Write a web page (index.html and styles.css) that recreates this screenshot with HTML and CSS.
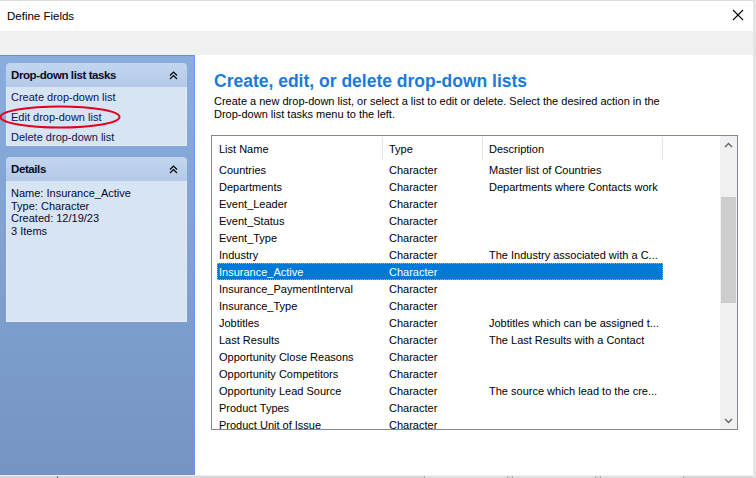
FILE: index.html
```html
<!DOCTYPE html>
<html>
<head>
<meta charset="utf-8">
<link rel="stylesheet" href="styles.css">
</head>
<body>
<div class="topline"></div>
<div class="window">
  <div class="titlebar">
    <span class="title">Define Fields</span>
    <svg class="close" width="12" height="12" viewBox="0 0 12 12"><path d="M1 1 L11 11 M11 1 L1 11" stroke="#000" stroke-width="1.1" fill="none"/></svg>
  </div>
  <div class="band"></div>
  <div class="main">
    <aside class="sidebar">
      <section class="box">
        <div class="box-head">
          <span>Drop-down list tasks</span>
          <svg class="chev" width="9" height="9" viewBox="0 0 9 9"><path d="M1 4.5 L4.5 1 L8 4.5 M1 8 L4.5 4.5 L8 8" stroke="#000" stroke-width="1.2" fill="none"/></svg>
        </div>
        <div class="box-body tasks">
          <div class="task">Create drop-down list</div>
          <div class="task edit">Edit drop-down list
            <svg class="ring" width="122" height="24" viewBox="0 0 122 24"><ellipse cx="61" cy="12" rx="59.5" ry="10.5" stroke="#e3001b" stroke-width="2" fill="none"/></svg>
          </div>
          <div class="task">Delete drop-down list</div>
        </div>
      </section>
      <section class="box">
        <div class="box-head">
          <span>Details</span>
          <svg class="chev" width="9" height="9" viewBox="0 0 9 9"><path d="M1 4.5 L4.5 1 L8 4.5 M1 8 L4.5 4.5 L8 8" stroke="#000" stroke-width="1.2" fill="none"/></svg>
        </div>
        <div class="box-body details">
          <div>Name: Insurance_Active</div>
          <div>Type: Character</div>
          <div>Created: 12/19/23</div>
          <div>3 Items</div>
        </div>
      </section>
    </aside>
    <div class="content">
      <h1 class="heading">Create, edit, or delete drop-down lists</h1>
      <p class="intro">Create a new drop-down list, or select a list to edit or delete. Select the desired action in the<br>Drop-down list tasks menu to the left.</p>
      <div class="table">
        <div class="list">
          <div class="head">
            <div class="c1 hc">List Name</div>
            <div class="c2 hc">Type</div>
            <div class="c3 hc">Description</div>
          </div>
          <div class="rows">
            <div class="row"><span class="c1">Countries</span><span class="c2">Character</span><span class="c3">Master list of Countries</span></div>
            <div class="row"><span class="c1">Departments</span><span class="c2">Character</span><span class="c3">Departments where Contacts work</span></div>
            <div class="row"><span class="c1">Event_Leader</span><span class="c2">Character</span><span class="c3"></span></div>
            <div class="row"><span class="c1">Event_Status</span><span class="c2">Character</span><span class="c3"></span></div>
            <div class="row"><span class="c1">Event_Type</span><span class="c2">Character</span><span class="c3"></span></div>
            <div class="row"><span class="c1">Industry</span><span class="c2">Character</span><span class="c3">The Industry associated with a C...</span></div>
            <div class="row sel"><span class="c1">Insurance_Active</span><span class="c2">Character</span><span class="c3"></span></div>
            <div class="row"><span class="c1">Insurance_PaymentInterval</span><span class="c2">Character</span><span class="c3"></span></div>
            <div class="row"><span class="c1">Insurance_Type</span><span class="c2">Character</span><span class="c3"></span></div>
            <div class="row"><span class="c1">Jobtitles</span><span class="c2">Character</span><span class="c3">Jobtitles which can be assigned t...</span></div>
            <div class="row"><span class="c1">Last Results</span><span class="c2">Character</span><span class="c3">The Last Results with a Contact</span></div>
            <div class="row"><span class="c1">Opportunity Close Reasons</span><span class="c2">Character</span><span class="c3"></span></div>
            <div class="row"><span class="c1">Opportunity Competitors</span><span class="c2">Character</span><span class="c3"></span></div>
            <div class="row"><span class="c1">Opportunity Lead Source</span><span class="c2">Character</span><span class="c3">The source which lead to the cre...</span></div>
            <div class="row"><span class="c1">Product Types</span><span class="c2">Character</span><span class="c3"></span></div>
            <div class="row"><span class="c1">Product Unit of Issue</span><span class="c2">Character</span><span class="c3"></span></div>
          </div>
        </div>
        <div class="scrollbar">
          <div class="sb-btn"><svg width="9" height="6" viewBox="0 0 9 6"><path d="M1 5 L4.5 1.5 L8 5" stroke="#606060" stroke-width="1.3" fill="none"/></svg></div>
          <div class="sb-gap"></div>
          <div class="sb-thumb"></div>
          <div class="sb-fill"></div>
          <div class="sb-btn"><svg width="9" height="6" viewBox="0 0 9 6"><path d="M1 1 L4.5 4.5 L8 1" stroke="#606060" stroke-width="1.3" fill="none"/></svg></div>
        </div>
      </div>
    </div>
  </div>
</div>
<div class="bottom">
  <div class="tick"></div>
  <div class="btn back">&lt; Back</div>
  <div class="btn">Next &gt;</div>
  <div class="btn">Cancel</div>
</div>
</body>
</html>
```

FILE: styles.css
```css
html, body {
  margin: 0;
  padding: 0;
}
body {
  width: 756px;
  height: 478px;
  overflow: hidden;
  background: #e4e4e4;
  font-family: "Liberation Sans", Arial, sans-serif;
  font-size: 11px;
  color: #000;
}
.topline {
  height: 1px;
  width: 753px;
  background: #dcdcdc;
}
.window {
  width: 753px;
  height: 474px;
  background: #fff;
  display: flex;
  flex-direction: column;
}
.titlebar {
  height: 30px;
  flex: none;
  display: flex;
  align-items: center;
  justify-content: space-between;
  padding: 0 9px 0 7px;
  background: #fff;
}
.title {
  font-size: 11.5px;
  color: #000;
  margin-top: -1px;
}
.close {
  display: block;
  margin-top: -2px;
}
.band {
  height: 24px;
  flex: none;
  background: #f0f0f0;
}
.main {
  flex: 1;
  display: flex;
  min-height: 0;
}
.sidebar {
  flex: none;
  border-right: 1px solid #639ae6;
  border-top: 1px solid #6d8fc6;
  background: linear-gradient(#8aaddf, #7594c3);
  padding: 7px 0 0 6px;
  box-sizing: border-box;
  width: 195px;
  display: flex;
  flex-direction: column;
  gap: 11px;
}
.box {
  width: 181px;
}
.box-head {
  height: 24px;
  box-sizing: border-box;
  border-radius: 4px 4px 0 0;
  background: linear-gradient(#c3d6ef, #b3c9e7);
  display: flex;
  align-items: center;
  justify-content: space-between;
  padding: 0 9px 0 5px;
  font-weight: bold;
  font-size: 11.5px;
  letter-spacing: -0.4px;
  color: #0a0a1e;
}
.chev {
  display: block;
}
.box-body {
  background: #d6e4f4;
  border: 1px solid #e2ecf8;
  border-top: none;
  box-sizing: border-box;
}
.tasks {
  height: 59px;
}
.task {
  height: 20px;
  line-height: 20px;
  padding-left: 4px;
  color: #12124a;
  position: relative;
}
.ring {
  position: absolute;
  left: -8px;
  top: -2px;
}
.details {
  height: 141px;
  padding: 6px 0 0 4px;
  line-height: 12.5px;
  color: #0a0a2a;
}
.content {
  flex: 1;
  padding: 0 0 0 16px;
  min-width: 0;
}
.heading {
  margin: 16px 0 0 3px;
  font-size: 17.5px;
  line-height: 20px;
  font-weight: bold;
  color: #1b7ad8;
}
.intro {
  margin: 4px 0 0 3px;
  line-height: 13px;
  font-size: 11px;
}
.table {
  margin-top: 14px;
  width: 527px;
  height: 295px;
  box-sizing: border-box;
  border: 1px solid #828790;
  display: flex;
  overflow: hidden;
}
.list {
  flex: 1;
  overflow: hidden;
}
.head {
  height: 25px;
  display: flex;
  padding-left: 5px;
}
.hc {
  height: 23px;
  margin-top: 1px;
  padding-top: 1px;
  line-height: 22px;
  border-right: 1px solid #e5e5e5;
  box-sizing: border-box;
}
.c1 {
  width: 166px;
  padding-left: 2px;
  box-sizing: border-box;
  flex: none;
  white-space: nowrap;
  overflow: hidden;
}
.c2 {
  width: 100px;
  padding-left: 6px;
  box-sizing: border-box;
  flex: none;
  white-space: nowrap;
}
.c3 {
  width: 180px;
  padding-left: 6px;
  box-sizing: border-box;
  flex: none;
  white-space: nowrap;
  overflow: hidden;
}
.rows {
  padding-left: 5px;
}
.row {
  display: flex;
  width: 446px;
  height: 16px;
  padding-top: 1px;
  line-height: 16px;
}
.row.sel {
  background: #0078d7;
  color: #fff;
  outline: 1px dotted #e8a040;
  outline-offset: -1px;
}
.scrollbar {
  width: 17px;
  flex: none;
  background: #f0f0f0;
  display: flex;
  flex-direction: column;
}
.sb-btn {
  height: 17px;
  flex: none;
  display: flex;
  align-items: center;
  justify-content: center;
}
.sb-gap {
  height: 44px;
  flex: none;
}
.sb-thumb {
  height: 106px;
  flex: none;
  margin: 0 1px;
  background: #cdcdcd;
}
.sb-fill {
  flex: 1;
}
.bottom {
  height: 3px;
  width: 753px;
  background: #d6d6d6;
  border-top: 1px solid #efefef;
  box-sizing: border-box;
  display: flex;
}
.tick {
  width: 1px;
  height: 3px;
  background: #6c6c6c;
  margin-left: 57px;
  flex: none;
}
.btn {
  width: 84px;
  height: 3px;
  margin-left: 4px;
  flex: none;
  background: #e1e1e1;
  border-left: 1px solid #adadad;
  border-right: 1px solid #adadad;
  box-sizing: border-box;
  font-size: 11px;
  line-height: 14px;
  text-align: center;
  color: #707070;
  overflow: hidden;
}
.btn.back {
  margin-left: 366px;
}
```
